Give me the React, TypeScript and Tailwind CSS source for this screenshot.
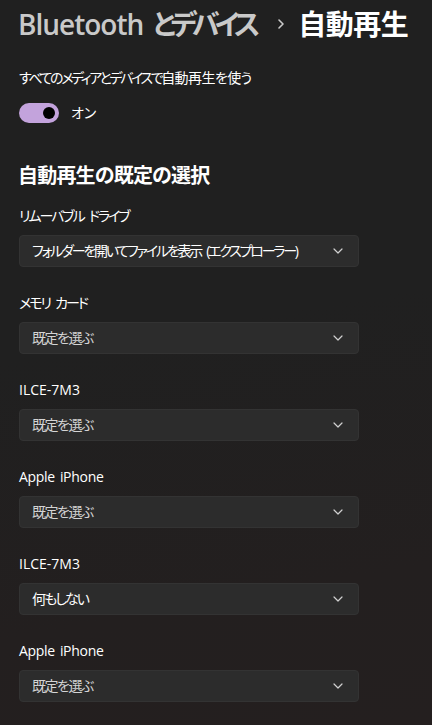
import React from "react";

const font = {
  fontFamily: '"Open Sans", "Noto Sans CJK JP", sans-serif',
};

function Chevron() {
  return (
    <svg width="10" height="6" viewBox="0 0 10 6" fill="none">
      <path d="M1 1l4 4 4-4" stroke="#d0d0d0" strokeWidth="1.2" strokeLinecap="round" strokeLinejoin="round" />
    </svg>
  );
}

function Spaced({ text }: { text: string }) {
  const parts = text.split(" ");
  return (
    <>
      {parts.map((p, i) => (
        <React.Fragment key={i}>
          {i > 0 && <span className="inline-block w-[5px]" />}
          {p}
        </React.Fragment>
      ))}
    </>
  );
}

function Group({ label, value, placeholder, lt, vt }: { label: string; value: string; placeholder?: boolean; lt: string; vt: string }) {
  return (
    <div className="flex flex-col">
      <div className={"h-[20px] leading-[20px] text-[14px] text-white whitespace-nowrap " + lt}>
        <Spaced text={label} />
      </div>
      <div className="mt-[9px] w-[340px] h-[32px] rounded-[4px] bg-[#2c2c2c] border border-[#333333] flex items-center justify-between pl-[12px] pr-[15px]">
        <span className={"text-[14px] leading-[20px] whitespace-nowrap " + vt + " " + (placeholder ? "text-[#d4d4d4]" : "text-white")}>
          <Spaced text={value} />
        </span>
        <Chevron />
      </div>
    </div>
  );
}

export default function App() {
  return (
    <div
      className="w-[432px] h-[725px] overflow-hidden bg-[linear-gradient(170deg,#202020_0%,#202020_45%,#231f1f_80%,#241f1f_100%)] [font-feature-settings:'palt']"
      style={font}
    >
      <div className="pl-[18px] pt-[6px] flex items-center h-[42px] whitespace-nowrap">
        <span className="shrink-0 text-[28px] leading-[36px] font-semibold text-[#c9c9c9]">
          <span className="tracking-[-1px]">Bluetooth</span>
          <span className="inline-block w-[9px]" />
          <span className="tracking-[-5px]">とデバイス</span>
        </span>
        <span className="shrink-0 ml-[22px] mr-[13px]">
          <svg width="8" height="12" viewBox="0 0 8 12" fill="none">
            <path d="M2 2l4 4-4 4" stroke="#c9c9c9" strokeWidth="1.6" strokeLinecap="round" strokeLinejoin="round" />
          </svg>
        </span>
        <span className="shrink-0 text-[28px] leading-[36px] font-semibold text-white tracking-[-0.5px]">自動再生</span>
      </div>

      <div className="pl-[19px] mt-[26px] h-[20px] text-[14px] leading-[20px] text-white whitespace-nowrap">
        <span className="tracking-[-2.4px]">すべてのメディアとデバイスで</span>
        <span className="tracking-[-0.6px]">自動再生を使う</span>
      </div>

      <div className="pl-[19px] mt-[15px] flex items-center h-[20px]">
        <div className="w-[40px] h-[20px] rounded-full bg-[#c3a3dc] flex items-center justify-end pr-[4px]">
          <div className="w-[12px] h-[12px] rounded-full bg-black" />
        </div>
        <span className="ml-[12px] text-[14px] leading-[20px] text-white">オン</span>
      </div>

      <div className="pl-[18px] mt-[39px] text-[20px] leading-[28px] font-bold text-white whitespace-nowrap tracking-[-0.8px]">自動再生の既定の選択</div>

      <div className="pl-[19px] mt-[16px] flex flex-col gap-[26px]">
        <Group label="リムーバブル ドライブ" lt="tracking-[-2px]" value="フォルダーを開いてファイルを表示 (エクスプローラー)" vt="tracking-[-2.2px]" />
        <Group label="メモリ カード" lt="tracking-[-2px]" value="既定を選ぶ" vt="tracking-[-1.5px]" placeholder />
        <Group label="ILCE-7M3" lt="" value="既定を選ぶ" vt="tracking-[-1.5px]" placeholder />
        <Group label="Apple iPhone" lt="tracking-[-0.3px]" value="既定を選ぶ" vt="tracking-[-1.5px]" placeholder />
        <Group label="ILCE-7M3" lt="" value="何もしない" vt="tracking-[-2px]" />
        <Group label="Apple iPhone" lt="tracking-[-0.3px]" value="既定を選ぶ" vt="tracking-[-1.5px]" placeholder />
      </div>
    </div>
  );
}
